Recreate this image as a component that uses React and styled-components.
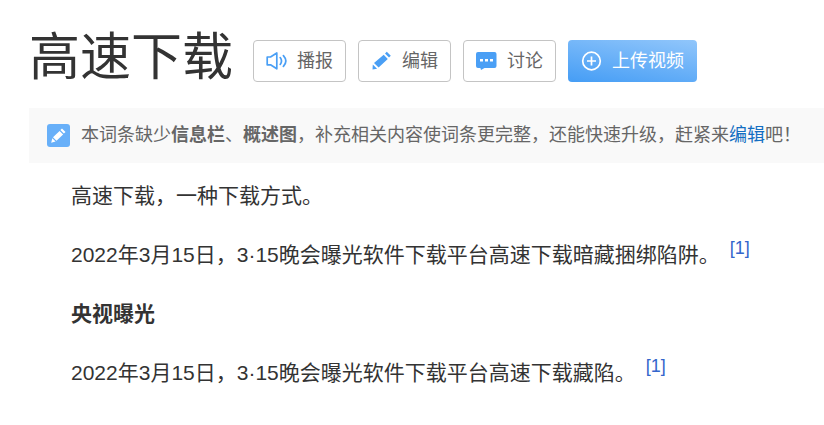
import React from 'react'
import styled, { createGlobalStyle } from 'styled-components'

const GlobalStyle = createGlobalStyle`
  body {
    margin: 0;
    background: #fff;
    color: #333;
    font-family: "Liberation Sans", "Noto Sans CJK SC", sans-serif;
  }
`

const Page = styled.main`
  padding: 28px 0 24px 29px;
`

const Header = styled.header`
  display: flex;
  align-items: center;
`

const Title = styled.h1`
  margin: 0 20px 0 0;
  font-size: 51px;
  font-weight: 400;
  line-height: 60px;
  white-space: nowrap;
`

const Actions = styled.div`
  display: flex;
  gap: 12px;
  margin-top: 6px;
`

const Button = styled.button`
  display: flex;
  align-items: center;
  gap: 10px;
  height: 42px;
  padding: 0 12px;
  border: 1px solid #c4c4c4;
  border-radius: 4px;
  background: #fff;
  color: #666;
  font-family: inherit;
  font-size: 18px;
  line-height: 24px;
  white-space: nowrap;
  cursor: pointer;
`

const UploadButton = styled(Button)`
  padding: 0 13px;
  border: 0;
  background: linear-gradient(10deg, #459df5, #91c6fb);
  color: #fff;
`

const Icon = styled.svg`
  flex: none;
  width: 21px;
  height: 21px;
`

const Notice = styled.div`
  display: flex;
  align-items: center;
  gap: 11px;
  margin-top: 20px;
  padding: 14px 18px;
  background: #f9f9f9;
  color: #666;
  font-size: 18px;
  line-height: 27px;
`

const NoticeIcon = styled.svg`
  flex: none;
  width: 23px;
  height: 23px;
`

const NoticeText = styled.p`
  margin: 0;
`

const EditLink = styled.a`
  color: #136ec2;
  text-decoration: none;
`

const Article = styled.article`
  padding: 14px 42px 0;
  font-size: 21px;
  line-height: 37px;
`

const Paragraph = styled.p`
  margin: 0 0 22px;
`

const SubTitle = styled.h2`
  margin: 0 0 22px;
  font-size: 21px;
  font-weight: 700;
`

const Reference = styled.sup`
  margin-left: 10px;
  font-size: 18px;
  line-height: 0;

  a {
    color: #3366cc;
    text-decoration: none;
  }
`

const SpeakerIcon = () => (
  <Icon viewBox="0 0 21 21" fill="none" stroke="#4a9ff5" strokeWidth="1.7" strokeLinejoin="round" strokeLinecap="round">
    <path d="M1.200 6h3.300L10.800 2v15.800l-6.300-4H1.200z" />
    <path d="M14.200 6.600c1.700 2.200 1.700 4.600 0 6.800M17.400 4.600c3.100 3.400 3.100 7.400 0 10.800" />
  </Icon>
)

const PencilIcon = () => (
  <Icon viewBox="0 0 21 21" fill="#4a9ff5">
    <path d="M15.800 .8 19.800 4.800 18 6.600l-4-4zM12.700 3.800l4.100 4.100-9.200 8.600-4.600-4.500zM1.800 13.400l4.300 4.300-4.600 .7z" />
  </Icon>
)

const ChatIcon = () => (
  <Icon viewBox="0 0 21 21">
    <path d="M2 1h16.500a2 2 0 0 1 2 2v12a2 2 0 0 1-2 2H8.500l-3.500 2-.6-2H2a2 2 0 0 1-2-2V3a2 2 0 0 1 2-2z" fill="#4a9ff5" />
    <path d="M4 8h3v2.500H4zM9 8h3v2.500H9zM14 8h3v2.500h-3z" fill="#fff" />
  </Icon>
)

const PlusIcon = () => (
  <Icon viewBox="0 0 21 21" fill="none" stroke="#fff" strokeWidth="1.7">
    <circle cx="10.500" cy="10" r="8.800" />
    <path d="M10.500 5.500v9M6 10h9" />
  </Icon>
)

const EntryIcon = () => (
  <NoticeIcon viewBox="0 0 23 23">
    <rect width="23" height="23" rx="3" fill="#68b0f9" />
    <path d="M15 4.500 18.500 8l-1.600 1.600-3.500-3.500zM12.600 6.900l3.500 3.500-6.600 6.400-3.500-3.500zM5.300 14.200l3.300 3.300-4.400 1.200z" fill="#fff" />
  </NoticeIcon>
)

const Cite = () => (
  <Reference>
    <a href="#ref-1">[1]</a>
  </Reference>
)

const App = () => {
  return (
    <Page>
      <GlobalStyle />
      <Header>
        <Title>高速下载</Title>
        <Actions>
          <Button type="button"><SpeakerIcon />播报</Button>
          <Button type="button"><PencilIcon />编辑</Button>
          <Button type="button"><ChatIcon />讨论</Button>
          <UploadButton type="button"><PlusIcon />上传视频</UploadButton>
        </Actions>
      </Header>
      <Notice>
        <EntryIcon />
        <NoticeText>
          本词条缺少<b>信息栏</b>、<b>概述图</b>&#xff0c;补充相关内容使词条更完整&#xff0c;还能快速升级&#xff0c;赶紧来<EditLink href="#edit">编辑</EditLink>吧&#xff01;
        </NoticeText>
      </Notice>
      <Article>
        <Paragraph>高速下载&#xff0c;一种下载方式。</Paragraph>
        <Paragraph>2022年3月15日&#xff0c;3·15晚会曝光软件下载平台高速下载暗藏捆绑陷阱。<Cite /></Paragraph>
        <SubTitle>央视曝光</SubTitle>
        <Paragraph>2022年3月15日&#xff0c;3·15晚会曝光软件下载平台高速下载藏陷。<Cite /></Paragraph>
      </Article>
    </Page>
  )
}

export default App
